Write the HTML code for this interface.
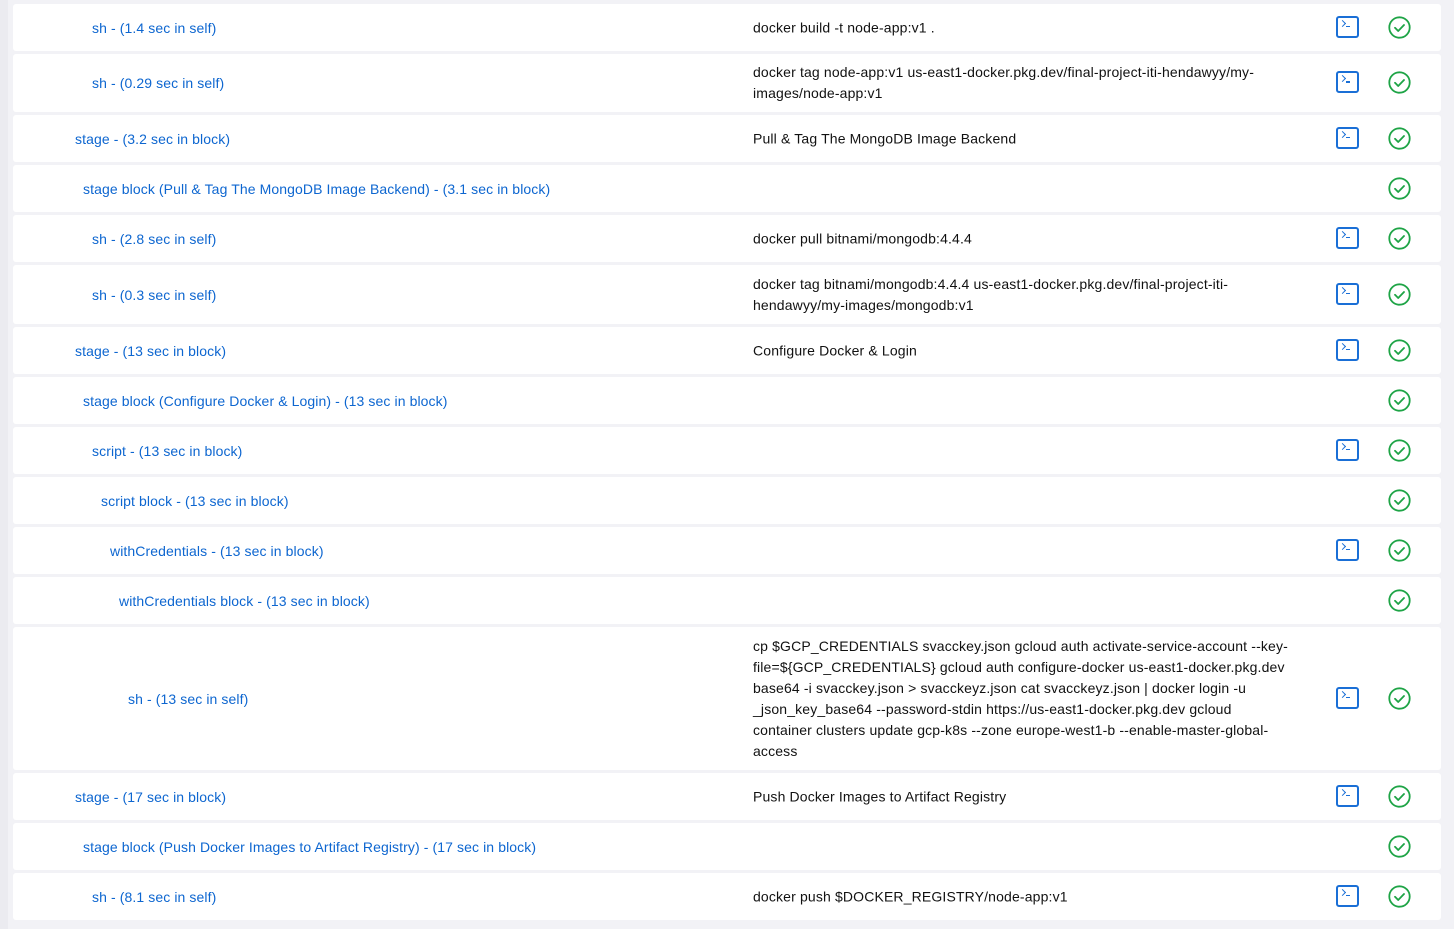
<!DOCTYPE html>
<html><head><meta charset="utf-8"><style>
body{margin:0;background:#f2f2f6;font-family:"Liberation Sans",sans-serif;font-size:14px;width:1454px;height:929px;overflow:hidden;position:relative}
.strip{position:absolute;left:0;top:0;width:8px;height:929px;background:#ebebf0}
.row{position:absolute;left:13px;width:1428px;background:#fff;border-radius:3px}
.lab{position:absolute;color:#0d66d0;top:50%;transform:translateY(-50%);white-space:nowrap;letter-spacing:0.1px}
.cmd{position:absolute;left:740px;width:560px;color:#111;top:50%;transform:translateY(-50%);line-height:21px;letter-spacing:0.15px;white-space:nowrap}
.term{position:absolute;left:1323px;top:50%;margin-top:-12px;width:19px;height:18px;border:2px solid #1a6fd6;border-radius:3px}
.term:after{content:"";position:absolute;left:2px;top:3px;width:4px;height:4px;border-right:1.6px solid #1a6fd6;border-bottom:1.6px solid #1a6fd6;transform:rotate(-45deg)}
.term:before{content:"";position:absolute;left:8px;top:8px;width:4px;height:1.6px;background:#1a6fd6}
.ok{position:absolute;left:1375px;top:50%;margin-top:-12px}
</style></head><body><div class="strip"></div>
<div id="c"></div>
<script>
const rows=[
[4,47,92,"sh - (1.4 sec in self)","docker build -t node-app:v1 .",1],
[54,58,92,"sh - (0.29 sec in self)","docker tag node-app:v1 us-east1-docker.pkg.dev/final-project-iti-hendawyy/my-<br>images/node-app:v1",1],
[115,47,75,"stage - (3.2 sec in block)","Pull &amp; Tag The MongoDB Image Backend",1],
[165,47,83,"stage block (Pull &amp; Tag The MongoDB Image Backend) - (3.1 sec in block)","",0],
[215,47,92,"sh - (2.8 sec in self)","docker pull bitnami/mongodb:4.4.4",1],
[265,59,92,"sh - (0.3 sec in self)","docker tag bitnami/mongodb:4.4.4 us-east1-docker.pkg.dev/final-project-iti-<br>hendawyy/my-images/mongodb:v1",1],
[327,47,75,"stage - (13 sec in block)","Configure Docker &amp; Login",1],
[377,47,83,"stage block (Configure Docker &amp; Login) - (13 sec in block)","",0],
[427,47,92,"script - (13 sec in block)","",1],
[477,47,101,"script block - (13 sec in block)","",0],
[527,47,110,"withCredentials - (13 sec in block)","",1],
[577,47,119,"withCredentials block - (13 sec in block)","",0],
[627,143,128,"sh - (13 sec in self)","cp $GCP_CREDENTIALS svacckey.json gcloud auth activate-service-account --key-<br>file=${GCP_CREDENTIALS} gcloud auth configure-docker us-east1-docker.pkg.dev<br>base64 -i svacckey.json &gt; svacckeyz.json cat svacckeyz.json | docker login -u<br>_json_key_base64 --password-stdin https://us-east1-docker.pkg.dev gcloud<br>container clusters update gcp-k8s --zone europe-west1-b --enable-master-global-<br>access",1],
[773,47,75,"stage - (17 sec in block)","Push Docker Images to Artifact Registry",1],
[823,47,83,"stage block (Push Docker Images to Artifact Registry) - (17 sec in block)","",0],
[873,47,92,"sh - (8.1 sec in self)","docker push $DOCKER_REGISTRY/node-app:v1",1]];
let h="";
const ok='<svg class="ok" width="23" height="23" viewBox="0 0 23 23"><circle cx="11.5" cy="11.5" r="10.2" fill="none" stroke="#1ea446" stroke-width="1.8"/><path d="M7 11.8l3.2 3.2 5.8-6" fill="none" stroke="#1ea446" stroke-width="1.8" stroke-linecap="round" stroke-linejoin="round"/></svg>';
for(const r of rows){h+=`<div class="row" style="top:${r[0]}px;height:${r[1]}px"><span class="lab" style="left:${r[2]-13}px">${r[3]}</span>${r[4]?`<div class="cmd">${r[4]}</div>`:""}${r[5]?'<div class="term"></div>':""}${ok}</div>`}
document.getElementById("c").innerHTML=h;
</script></body></html>
